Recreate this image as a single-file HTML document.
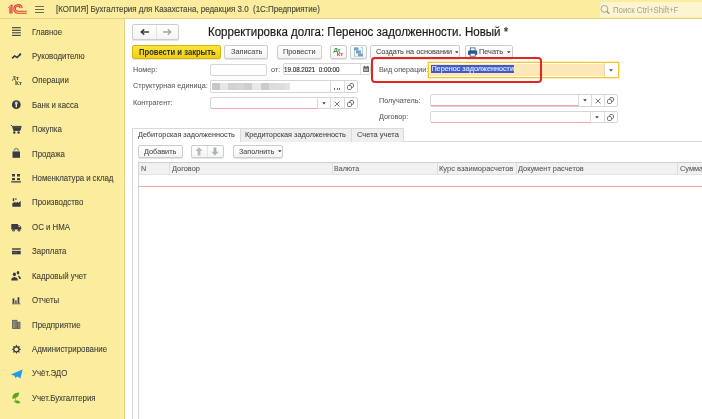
<!DOCTYPE html>
<html><head><meta charset="utf-8">
<style>
*{box-sizing:border-box;margin:0;padding:0}
html,body{width:702px;height:419px;overflow:hidden;background:#fff;font-family:"Liberation Sans",sans-serif;color:#4d4d4d;position:relative}
.a{position:absolute}
.t{position:absolute;white-space:nowrap;line-height:10px}
.si{position:absolute;left:32px;font-size:9px;transform:scaleX(0.875);transform-origin:0 0;color:#403f36;-webkit-text-stroke:0.1px #403f36;white-space:nowrap;line-height:10px}
.btn{position:absolute;border:1px solid #cdcdcd;border-radius:2px;background:linear-gradient(#ffffff,#f4f4f4);box-shadow:0 1px 0 rgba(0,0,0,.10)}
.inp{position:absolute;border:1px solid #cfcfcf;border-radius:2px;background:#fff}
.lbl{position:absolute;font-size:7.25px;color:#5a5a5a;white-space:nowrap;line-height:10px}
.bt{position:absolute;font-size:7.35px;color:#474747;white-space:nowrap;line-height:10px}
.vs{position:absolute;width:1px;background:#d6d6d6}
.arr{position:absolute;width:0;height:0;border-left:1.6px solid transparent;border-right:1.6px solid transparent;border-top:2px solid #444}
body{will-change:transform}
.lbl,.bt,.t{-webkit-text-stroke-width:0.15px}
.lbl,.bt{-webkit-text-stroke-width:0.06px}
</style></head><body>
<div class="a" style="left:0;top:0;width:702px;height:19px;background:#fbec9e;border-bottom:1px solid #e3d387"></div>
<div class="a" style="left:0;top:19px;width:125px;height:400px;background:#fbec9e;border-right:1px solid #e2d38a"></div>
<div class="a" style="left:122px;top:19px;width:2px;height:400px;background:#fcef9f"></div>
<!-- 1C logo -->
<svg class="a" style="left:0;top:0" width="30" height="18" viewBox="0 0 30 18">
<path d="M9.1 13.6 V8.2 L10.8 6.4 V4.7 H12.7 V13.6 Z" fill="#e66a58"/>
<path d="M10.4 4.9 L12.4 4.7 L12.2 5.9 L10.6 6.2 Z" fill="#db3a30"/>
<path d="M8.1 7.3 L9.6 6.2 L10.2 7 L8.8 8.1 Z" fill="#db3a30"/>
<path d="M22.2 8.1 A4.25 4.25 0 1 0 18.1 13.2 H26.75" stroke="#e03a30" stroke-width="1.15" fill="none"/>
<path d="M20.2 8 A2.5 2.5 0 1 0 18.1 11.2 H26.75" stroke="#e03a30" stroke-width="1.1" fill="none"/>
</svg>
<!-- hamburger -->
<div class="a" style="left:35px;top:6px;width:9px;height:1px;background:#6f6a55"></div>
<div class="a" style="left:35px;top:9px;width:9px;height:1px;background:#6f6a55"></div>
<div class="a" style="left:35px;top:12px;width:9px;height:1px;background:#6f6a55"></div>
<div class="t" style="left:56px;top:4.4px;font-size:9px;color:#4c4838;transform:scaleX(0.8847);transform-origin:0 0">[КОПИЯ] Бухгалтерия для Казахстана, редакция 3.0&nbsp; (1С:Предприятие)</div>
<!-- search -->
<div class="a" style="left:599.5px;top:1.8px;width:103px;height:14.8px;background:#fdf5d2"></div>
<svg class="a" style="left:599px;top:4px" width="12" height="11" viewBox="0 0 12 11"><circle cx="5.4" cy="4.9" r="3.4" stroke="#a19f8e" stroke-width="0.95" fill="none"/><path d="M7.7 7.3 L10.3 9.8" stroke="#9c9a8c" stroke-width="1.4"/></svg>
<div class="t" style="left:613px;top:5.11px;font-size:8.35px;color:#a3a190;-webkit-text-stroke-width:0;transform:scaleX(0.9346);transform-origin:0 0">Поиск Ctrl+Shift+F</div>

<!-- sidebar icons -->
<svg class="a" style="left:0;top:19px" width="30" height="400" viewBox="0 19 30 400">
<rect x="12" y="28" width="8.8" height="2" fill="#d8cf96"/><rect x="12" y="33.1" width="8.8" height="2" fill="#d8cf96"/>
<g fill="#4a4a44">
<rect x="12" y="27.1" width="8.8" height="1"/><rect x="12" y="29.9" width="8.8" height="1"/><rect x="12" y="32.2" width="8.8" height="1"/><rect x="12" y="35" width="8.8" height="1"/>
</g>
<path d="M12.1 58.4 L14.6 55.9 L17.1 57.5 L20 54.6" stroke="#33334a" stroke-width="1.5" fill="none"/>
<circle cx="20.2" cy="54.3" r="1.1" fill="#33334a"/>
<text x="12" y="80.2" font-size="5.7" font-weight="bold" fill="#3a3a34" font-family="Liberation Serif">Дт</text>
<text x="15" y="84.8" font-size="5.6" font-weight="bold" fill="#3a3a34" font-family="Liberation Serif">Кт</text>
<circle cx="16.3" cy="104.7" r="4.4" fill="#3a3a46"/>
<circle cx="16.3" cy="102.9" r="1.5" fill="#cfc8a0"/>
<rect x="15.6" y="103.4" width="1.4" height="4" fill="#f4eab0"/>
<path d="M10.8 125 L12.6 126.4 L13.6 130.4 H20 L21.2 126.4 H12.8" fill="#3a3a44" stroke="#3a3a44" stroke-width="0.9"/>
<rect x="13.4" y="127.6" width="7" height="0.5" fill="#6a6a66"/>
<circle cx="14.3" cy="132.5" r="1.2" fill="#3a3a44"/><circle cx="18.6" cy="132.5" r="1.2" fill="#3a3a44"/>
<rect x="12.5" y="151.4" width="7.5" height="6.4" fill="#3c3c44"/>
<path d="M14.4 151.8 V150.4 A1.9 1.9 0 0 1 18.2 150.4 V151.8" stroke="#9a9680" stroke-width="1.3" fill="none"/>
<g fill="#33334a"><rect x="12" y="174" width="3" height="2.5"/><rect x="17" y="174" width="3" height="2.5"/><rect x="12" y="178.1" width="3" height="2"/><rect x="17" y="178.1" width="3" height="2"/></g><g fill="#6a6a80"><rect x="12" y="175" width="3" height="0.4"/><rect x="17" y="175" width="3" height="0.4"/></g>
<rect x="11.2" y="180.9" width="9.7" height="1.8" fill="#6a6a62"/>
<g fill="#3a3a44"><rect x="12.8" y="198.2" width="1.4" height="3"/><rect x="15" y="198.3" width="1.7" height="1.5" fill="#66665e"/>
<path d="M12.3 206.8 V203.2 L15.5 201.8 V203 L18 201.8 V203 L20.7 201 V206.8 Z"/></g>
<path d="M11.3 224 H18 V225.2 H19.8 L21.2 227.3 V229.6 H11.3 Z" fill="#3a3a44"/>
<rect x="18.6" y="225.8" width="1.4" height="1.3" fill="#f6e9a6"/>
<circle cx="13.6" cy="230.2" r="1.3" fill="#3a3a44"/><circle cx="19" cy="230.2" r="1.3" fill="#3a3a44"/>
<circle cx="13.6" cy="230.2" r="0.5" fill="#a8a488"/><circle cx="19" cy="230.2" r="0.5" fill="#a8a488"/>
<rect x="12" y="248" width="8.7" height="2.2" fill="#6f6d62"/><rect x="12" y="251" width="8.7" height="3.3" fill="#3a3a48"/><rect x="13" y="252.2" width="4" height="0.6" fill="#77768a"/>
<ellipse cx="14.4" cy="274.3" rx="1.55" ry="1.9" fill="#3a3a48"/><path d="M11.3 280.6 V279 Q11.5 277.4 14.4 277.1 Q17.3 277.4 17.7 279 V280.6 Z" fill="#3a3a48"/>
<ellipse cx="18" cy="272.7" rx="1.3" ry="1.8" fill="#3a3a48"/><path d="M18.5 275.4 Q20.9 276 20.9 278.9 H19 Q18.9 277 18 276.5 Z" fill="#3a3a48"/>
<g fill="#3a3a48"><rect x="12.6" y="298.4" width="1.7" height="5.2"/><rect x="15.1" y="300.3" width="1.6" height="3.3" fill="#5e5d58"/><rect x="17.6" y="297.2" width="1.7" height="6.4"/><rect x="12" y="303.4" width="8.5" height="0.9" fill="#66655a"/></g>
<rect x="12.6" y="320.3" width="4.3" height="8.1" fill="#a09e8c" stroke="#55554c" stroke-width="0.8"/>
<rect x="17.5" y="322.2" width="2.5" height="6.2" fill="#a09e8c" stroke="#55554c" stroke-width="0.8"/>
<path d="M14.1 320.8 V328 M15.5 320.8 V328 M18.7 322.6 V328" stroke="#5a5a52" stroke-width="0.5"/>
<g transform="translate(16.4 349.3) scale(1.08)" fill="#3a3a48">
<path d="M0 -4.4 L1 -2.6 L3.1 -3.1 L2.6 -1 L4.4 0 L2.6 1 L3.1 3.1 L1 2.6 L0 4.4 L-1 2.6 L-3.1 3.1 L-2.6 1 L-4.4 0 L-2.6 -1 L-3.1 -3.1 L-1 -2.6 Z"/>
<circle r="1.7" fill="#fbec9e"/></g>
<path d="M10.8 374.6 L22.6 369.4 L20.4 378.6 L17.4 376.6 L15.2 378 L14.6 375.8 Z" fill="#1e9cf0"/>
<path d="M12.4 398.8 C12.0 395.0 14.5 392.6 19.3 392.4 C19.0 396.2 16.4 398.2 12.4 398.8 Z" fill="#4aa10f"/>
<path d="M14.0 401.0 C16.5 400.2 19.2 400.6 20.3 402.4 C18.6 404.2 15.6 403.8 14.0 401.0 Z" fill="#4aa10f"/>
<path d="M15.6 397.6 L15.3 401" stroke="#8cc55a" stroke-width="0.9"/><path d="M13.2 398 L18.4 393.3" stroke="#86c252" stroke-width="0.5"/><path d="M15 401.4 L19.2 402.3" stroke="#86c252" stroke-width="0.5"/>
</svg>

<!-- sidebar items -->
<div class="si" style="top:26.5px">Главное</div>
<div class="si" style="top:50.9px">Руководителю</div>
<div class="si" style="top:75.3px">Операции</div>
<div class="si" style="top:99.8px">Банк и касса</div>
<div class="si" style="top:124.2px">Покупка</div>
<div class="si" style="top:148.6px">Продажа</div>
<div class="si" style="top:173.0px;letter-spacing:-0.08px">Номенклатура и склад</div>
<div class="si" style="top:197.4px">Производство</div>
<div class="si" style="top:221.9px">ОС и НМА</div>
<div class="si" style="top:246.3px">Зарплата</div>
<div class="si" style="top:270.7px">Кадровый учет</div>
<div class="si" style="top:295.1px">Отчеты</div>
<div class="si" style="top:319.5px">Предприятие</div>
<div class="si" style="top:344.0px">Администрирование</div>
<div class="si" style="top:368.4px">Учёт.ЭДО</div>
<div class="si" style="top:392.8px">Учет.Бухгалтерия</div>

<!-- nav buttons -->
<div class="btn" style="left:132px;top:24px;width:47px;height:16px"></div>
<div class="vs" style="left:156px;top:25px;height:14px;background:#e2e2e2"></div>
<svg class="a" style="left:138px;top:27px" width="40" height="10" viewBox="0 0 40 10">
<path d="M11 5 H3.5 M6.2 2.2 L3.2 5 L6.2 7.8" stroke="#3f3f3f" stroke-width="1.5" fill="none"/>
<path d="M25 5 H32.6 M29.8 2.2 L32.8 5 L29.8 7.8" stroke="#a5a5a5" stroke-width="1.3" fill="none"/>
</svg>
<div class="t" style="left:207.6px;top:24.88px;font-size:12.45px;color:#1c1c1c;line-height:14px;-webkit-text-stroke:0.2px #1c1c1c;transform:scaleX(0.9259);transform-origin:0 0">Корректировка долга: Перенос задолженности. Новый *</div>

<!-- toolbar -->
<div class="btn" style="left:132px;top:45px;width:89px;height:14px;background:linear-gradient(#fde43e,#f1cf0c);border-color:#d6b804"></div>
<div class="bt" style="left:138.6px;top:47.50px;font-size:8.19px;font-weight:bold;color:#2e2e2e;-webkit-text-stroke-width:0;transform:scaleX(0.9346);transform-origin:0 0">Провести и закрыть</div>
<div class="btn" style="left:224px;top:45px;width:44px;height:14px"></div>
<div class="bt" style="left:230.8px;top:47.42px;font-size:7.86px;transform:scaleX(0.9346);transform-origin:0 0">Записать</div>
<div class="btn" style="left:277px;top:45px;width:45px;height:14px"></div>
<div class="bt" style="left:283px;top:47.42px;font-size:7.86px;transform:scaleX(0.9346);transform-origin:0 0">Провести</div>
<div class="btn" style="left:330px;top:45px;width:17px;height:14px"></div>
<svg class="a" style="left:330px;top:45px" width="17" height="14" viewBox="0 0 17 14">
<text x="3.4" y="6.8" font-size="6.2" font-weight="bold" fill="#2f8f2f" font-family="Liberation Sans" letter-spacing="-0.2">Дт</text>
<text x="6.8" y="11.3" font-size="6.2" font-weight="bold" fill="#ea3a40" font-family="Liberation Sans" letter-spacing="-0.2">Кт</text>
</svg>
<div class="btn" style="left:350px;top:45px;width:17px;height:14px"></div>
<svg class="a" style="left:350px;top:45px" width="17" height="14" viewBox="0 0 17 14">
<path d="M4.5 5.5 V11.4 H7.5 M10.5 2.3 H12.6 V8" stroke="#a9c4dc" stroke-width="0.9" fill="none"/>
<g fill="#75a0c8"><rect x="4" y="2.3" width="4.5" height="3.2"/><rect x="6" y="5.5" width="5" height="3"/><rect x="8" y="8.5" width="5" height="3"/></g>
</svg>
<div class="btn" style="left:370px;top:45px;width:90px;height:14px"></div>
<div class="bt" style="left:376.2px;top:47.42px;font-size:7.86px;transform:scaleX(0.9346);transform-origin:0 0">Создать на основании</div>
<svg class="a" style="left:454.6px;top:50.8px" width="3.6" height="2.6" viewBox="0 0 3.6 2.6"><path d="M0 0.2 H3.6 L1.8 2.4 Z" fill="#3a3a3a"/></svg>
<div class="btn" style="left:465px;top:45px;width:47.5px;height:14px"></div>
<svg class="a" style="left:467px;top:46px" width="12" height="12" viewBox="0 0 12 12">
<rect x="3.3" y="1.9" width="4.8" height="3" fill="#fff" stroke="#2c5a8c" stroke-width="0.8"/>
<rect x="1" y="4.4" width="9.2" height="4.6" rx="1" fill="#2c5a8c"/>
<rect x="3.1" y="7.3" width="5.2" height="2.9" fill="#fff" stroke="#2c5a8c" stroke-width="0.8"/>
</svg>
<div class="bt" style="left:478.8px;top:47.42px;font-size:7.86px;transform:scaleX(0.9346);transform-origin:0 0">Печать</div>
<svg class="a" style="left:507.2px;top:50.8px" width="3.6" height="2.6" viewBox="0 0 3.6 2.6"><path d="M0 0.2 H3.6 L1.8 2.4 Z" fill="#3a3a3a"/></svg>

<!-- form left -->
<div class="lbl" style="left:132.6px;top:64.52px;font-size:7.76px;transform:scaleX(0.9346);transform-origin:0 0">Номер:</div>
<div class="lbl" style="left:271.4px;top:64.52px;font-size:7.76px;transform:scaleX(0.9346);transform-origin:0 0">от:</div>
<div class="a" style="left:209.5px;top:63.5px;width:57.0px;height:12.0px;border:1px solid #d6d6d6;border-radius:2px;background:#fff"></div>
<div class="a" style="left:283px;top:63.3px;width:87.80000000000001px;height:12.0px;border:1px solid #d6d6d6;border-radius:2px;background:#fff"></div>
<div class="a" style="left:360px;top:64.3px;width:1px;height:10.0px;background:#e2e2e2"></div>
<div class="t" style="left:284.3px;top:65.2px;font-size:7.6px;color:#2a2a2a;transform:scaleX(0.822);transform-origin:0 0">19.08.2021&nbsp; 0:00:00</div>
<svg class="a" style="left:362px;top:65px" width="8" height="8" viewBox="0 0 8 8"><rect x="1.2" y="1.6" width="5.8" height="5.4" fill="#606060"/><rect x="2" y="3.4" width="4.2" height="2.8" fill="#b0b0b0"/><rect x="2" y="0.8" width="1" height="1.2" fill="#606060"/><rect x="5.2" y="0.8" width="1" height="1.2" fill="#606060"/></svg>
<div class="lbl" style="left:132.6px;top:81.12px;font-size:7.76px;transform:scaleX(0.9346);transform-origin:0 0">Структурная единица:</div>
<div class="a" style="left:209.5px;top:80.2px;width:148.0px;height:12.5px;border:1px solid #d6d6d6;border-radius:2px;background:#fff"></div>
<div class="a" style="left:211.8px;top:82.5px;width:8.4px;height:7.7px;background:#c9c7cc"></div>
<div class="a" style="left:220.2px;top:82.5px;width:7.7px;height:7.7px;background:#e6e6e6"></div>
<div class="a" style="left:227.9px;top:82.5px;width:7.7px;height:7.7px;background:#d1d0d4"></div>
<div class="a" style="left:235.6px;top:82.5px;width:8.3px;height:7.7px;background:#d4d3d6"></div>
<div class="a" style="left:243.9px;top:82.5px;width:8.3px;height:7.7px;background:#cecece"></div>
<div class="a" style="left:252.2px;top:82.5px;width:8.4px;height:7.7px;background:#e8e8e8"></div>
<div class="a" style="left:260.6px;top:82.5px;width:8.3px;height:7.7px;background:#cccacd"></div>
<div class="a" style="left:268.9px;top:82.5px;width:8.3px;height:7.7px;background:#dcdcdc"></div>
<div class="a" style="left:277.2px;top:82.5px;width:7.7px;height:7.7px;background:#dedde0"></div>
<div class="a" style="left:284.9px;top:82.5px;width:5.1px;height:7.7px;background:#e3e3e7"></div>
<div class="a" style="left:330.3px;top:81.2px;width:1px;height:10.5px;background:#dadada"></div>
<div class="a" style="left:344px;top:81.2px;width:1px;height:10.5px;background:#dadada"></div>
<div class="a" style="left:334.2px;top:88.4px;width:1.2px;height:1.2px;background:#6a6a6a"></div><div class="a" style="left:336.6px;top:88.4px;width:1.2px;height:1.2px;background:#6a6a6a"></div><div class="a" style="left:339.0px;top:88.4px;width:1.2px;height:1.2px;background:#6a6a6a"></div>
<svg class="a" style="left:347.1px;top:83.0px" width="7" height="7" viewBox="0 0 7 7"><g fill="none" stroke="#5c5c5c" stroke-width="0.85"><path d="M2.7 2.6 V1.8 Q2.7 0.5 4 0.5 H5.2 Q6.5 0.5 6.5 1.8 V3.2 Q6.5 4.5 5.2 4.5 H4.5"/><rect x="0.5" y="2.5" width="4" height="4" rx="1.2"/></g></svg>
<div class="lbl" style="left:132.6px;top:98.12px;font-size:7.76px;transform:scaleX(0.9346);transform-origin:0 0">Контрагент:</div>
<div class="a" style="left:209.5px;top:96.9px;width:148.0px;height:12.399999999999991px;border:1px solid #d6d6d6;border-radius:2px;background:#fff"></div>
<div class="a" style="left:210.5px;top:107.6px;width:106.5px;height:1px;background:#f4a6a6"></div>
<div class="a" style="left:317.3px;top:97.9px;width:1px;height:10.399999999999991px;background:#dadada"></div>
<div class="a" style="left:330.3px;top:97.9px;width:1px;height:10.399999999999991px;background:#dadada"></div>
<div class="a" style="left:344px;top:97.9px;width:1px;height:10.399999999999991px;background:#dadada"></div>
<svg class="a" style="left:322px;top:101.7px" width="4" height="3" viewBox="0 0 4 3"><path d="M0.2 0.3 H3.8 L2 2.6 Z" fill="#3a3a3a"/></svg>
<svg class="a" style="left:334.4px;top:100.5px" width="6" height="6" viewBox="0 0 6 6"><path d="M0.6 0.6 L5.4 5.4 M5.4 0.6 L0.6 5.4" stroke="#555" stroke-width="0.8"/></svg>
<svg class="a" style="left:347.1px;top:99.9px" width="7" height="7" viewBox="0 0 7 7"><g fill="none" stroke="#5c5c5c" stroke-width="0.85"><path d="M2.7 2.6 V1.8 Q2.7 0.5 4 0.5 H5.2 Q6.5 0.5 6.5 1.8 V3.2 Q6.5 4.5 5.2 4.5 H4.5"/><rect x="0.5" y="2.5" width="4" height="4" rx="1.2"/></g></svg>

<!-- form right -->
<div class="lbl" style="left:379px;top:64.9px;font-size:7.76px;transform:scaleX(0.9346);transform-origin:0 0">Вид операции:</div>
<div class="a" style="left:428px;top:62px;width:191px;height:15.5px;border:1px solid #f6c52a;background:#fde6b8;box-shadow:0 0 0 0.4px #f9d458,inset 0 0 0 1px #fff"></div>
<div class="a" style="left:604.4px;top:63px;width:13.6px;height:13.5px;background:#fff;border-left:1px solid #e6d6b4"></div>
<svg class="a" style="left:609.4px;top:68.7px" width="4" height="3" viewBox="0 0 4 3"><path d="M0.2 0.3 H3.8 L2 2.6 Z" fill="#3a3a3a"/></svg>
<div class="a" style="left:431px;top:64.8px;width:83px;height:8px;background:#3d5cc6"></div>
<div class="t" style="left:431.4px;top:64px;font-size:7.25px;color:#dfe6ff">Перенос задолженности</div>
<div class="a" style="left:371px;top:57px;width:171px;height:25.6px;border:2.6px solid #e2251f;border-radius:4px"></div>
<div class="lbl" style="left:379px;top:95.72px;font-size:7.76px;transform:scaleX(0.9346);transform-origin:0 0">Получатель:</div>
<div class="a" style="left:429.5px;top:94.4px;width:188.0px;height:12.199999999999989px;border:1px solid #d6d6d6;border-radius:2px;background:#fff"></div>
<div class="a" style="left:430.5px;top:105px;width:147.5px;height:1px;background:#f4a6a6"></div>
<div class="a" style="left:578.3px;top:95.4px;width:1px;height:10.199999999999989px;background:#dadada"></div>
<div class="a" style="left:591.2px;top:95.4px;width:1px;height:10.199999999999989px;background:#dadada"></div>
<div class="a" style="left:604.3px;top:95.4px;width:1px;height:10.199999999999989px;background:#dadada"></div>
<svg class="a" style="left:582.5px;top:99.3px" width="4" height="3" viewBox="0 0 4 3"><path d="M0.2 0.3 H3.8 L2 2.6 Z" fill="#3a3a3a"/></svg>
<svg class="a" style="left:594.5px;top:97.5px" width="6" height="6" viewBox="0 0 6 6"><path d="M0.6 0.6 L5.4 5.4 M5.4 0.6 L0.6 5.4" stroke="#555" stroke-width="0.8"/></svg>
<svg class="a" style="left:607.1px;top:97.1px" width="7" height="7" viewBox="0 0 7 7"><g fill="none" stroke="#5c5c5c" stroke-width="0.85"><path d="M2.7 2.6 V1.8 Q2.7 0.5 4 0.5 H5.2 Q6.5 0.5 6.5 1.8 V3.2 Q6.5 4.5 5.2 4.5 H4.5"/><rect x="0.5" y="2.5" width="4" height="4" rx="1.2"/></g></svg>
<div class="lbl" style="left:379px;top:112.4px;font-size:7.76px;transform:scaleX(0.9346);transform-origin:0 0">Договор:</div>
<div class="a" style="left:429.5px;top:111.3px;width:188.0px;height:12.100000000000009px;border:1px solid #d6d6d6;border-radius:2px;background:#fff"></div>
<div class="a" style="left:430.5px;top:121.9px;width:159.5px;height:1px;background:#f4a6a6"></div>
<div class="a" style="left:590.3px;top:112.3px;width:1px;height:10.100000000000009px;background:#dadada"></div>
<div class="a" style="left:604.3px;top:112.3px;width:1px;height:10.100000000000009px;background:#dadada"></div>
<svg class="a" style="left:595.4px;top:116.1px" width="4" height="3" viewBox="0 0 4 3"><path d="M0.2 0.3 H3.8 L2 2.6 Z" fill="#3a3a3a"/></svg>
<svg class="a" style="left:607.1px;top:113.9px" width="7" height="7" viewBox="0 0 7 7"><g fill="none" stroke="#5c5c5c" stroke-width="0.85"><path d="M2.7 2.6 V1.8 Q2.7 0.5 4 0.5 H5.2 Q6.5 0.5 6.5 1.8 V3.2 Q6.5 4.5 5.2 4.5 H4.5"/><rect x="0.5" y="2.5" width="4" height="4" rx="1.2"/></g></svg>

<!-- tabs -->
<div class="a" style="left:132px;top:141px;width:570px;height:278px;border-left:1px solid #d9d9d9;border-top:1px solid #d9d9d9"></div>
<div class="a" style="left:240px;top:128px;width:112px;height:13.5px;border:1px solid #d9d9d9;border-bottom:none;background:#efefef"></div>
<div class="a" style="left:351px;top:128px;width:53px;height:13.5px;border:1px solid #d9d9d9;border-bottom:none;background:#efefef"></div>
<div class="a" style="left:132px;top:127.6px;width:109px;height:14.4px;border:1px solid #d9d9d9;border-bottom:none;background:#fff"></div>
<div class="lbl" style="left:138.2px;top:129.62px;font-size:7.78px;color:#444;transform:scaleX(0.9346);transform-origin:0 0">Дебиторская задолженность</div>
<div class="lbl" style="left:245.3px;top:129.62px;font-size:7.83px;color:#444;transform:scaleX(0.9346);transform-origin:0 0">Кредиторская задолженность</div>
<div class="lbl" style="left:356.6px;top:129.62px;font-size:8.03px;color:#444;transform:scaleX(0.9346);transform-origin:0 0">Счета учета</div>

<div class="btn" style="left:138px;top:144.6px;width:45px;height:13px"></div>
<div class="bt" style="left:144.3px;top:146.52px;font-size:7.84px;transform:scaleX(0.9346);transform-origin:0 0">Добавить</div>
<div class="btn" style="left:191px;top:144.6px;width:32.5px;height:13px"></div>
<div class="vs" style="left:206.8px;top:145.6px;height:11px;background:#e4e4e4"></div>
<svg class="a" style="left:191px;top:144.6px" width="33" height="13" viewBox="0 0 33 13">
<path d="M8 2.2 L11.6 6 H9.4 V10.4 H6.6 V6 H4.4 Z" fill="#b3bcc4"/>
<path d="M24 10.6 L27.6 6.8 H25.4 V2.4 H22.6 V6.8 H20.4 Z" fill="#a8b2bb"/>
</svg>
<div class="btn" style="left:232.6px;top:144.6px;width:50.8px;height:13px"></div>
<div class="bt" style="left:238.8px;top:146.53px;font-size:7.70px;transform:scaleX(0.9346);transform-origin:0 0">Заполнить</div>
<svg class="a" style="left:278px;top:149.9px" width="3.6" height="2.6" viewBox="0 0 3.6 2.6"><path d="M0 0.2 H3.6 L1.8 2.4 Z" fill="#3a3a3a"/></svg>

<!-- table -->
<div class="a" style="left:138px;top:162px;width:564px;height:257px;border-left:1px solid #d6d6d6;border-top:1px solid #cfcfcf"></div>
<div class="a" style="left:139px;top:163px;width:563px;height:11.6px;background:#f1f1f1;border-bottom:1px solid #e4e4e4"></div>
<div class="vs" style="left:169.2px;top:163px;height:11px;background:#dedede"></div>
<div class="vs" style="left:331.5px;top:163px;height:11px;background:#dedede"></div>
<div class="vs" style="left:436.6px;top:163px;height:11px;background:#dedede"></div>
<div class="vs" style="left:515.6px;top:163px;height:11px;background:#dedede"></div>
<div class="vs" style="left:676.8px;top:163px;height:11px;background:#dedede"></div>
<div class="lbl" style="left:141.4px;top:163.92px;color:#555;font-size:7.76px;transform:scaleX(0.9346);transform-origin:0 0">N</div>
<div class="lbl" style="left:172.2px;top:163.92px;font-size:7.92px;color:#555;transform:scaleX(0.9346);transform-origin:0 0">Договор</div>
<div class="lbl" style="left:334.4px;top:163.93px;font-size:7.60px;color:#555;transform:scaleX(0.9346);transform-origin:0 0">Валюта</div>
<div class="lbl" style="left:438.9px;top:163.92px;font-size:8.03px;color:#555;transform:scaleX(0.9346);transform-origin:0 0">Курс взаиморасчетов</div>
<div class="lbl" style="left:518.4px;top:163.92px;font-size:7.92px;color:#555;transform:scaleX(0.9346);transform-origin:0 0">Документ расчетов</div>
<div class="lbl" style="left:680px;top:163.92px;font-size:7.92px;color:#555;transform:scaleX(0.9346);transform-origin:0 0">Сумма</div>
<div class="a" style="left:139px;top:185.6px;width:563px;height:1px;background:#f5a3a3"></div>
</body></html>
